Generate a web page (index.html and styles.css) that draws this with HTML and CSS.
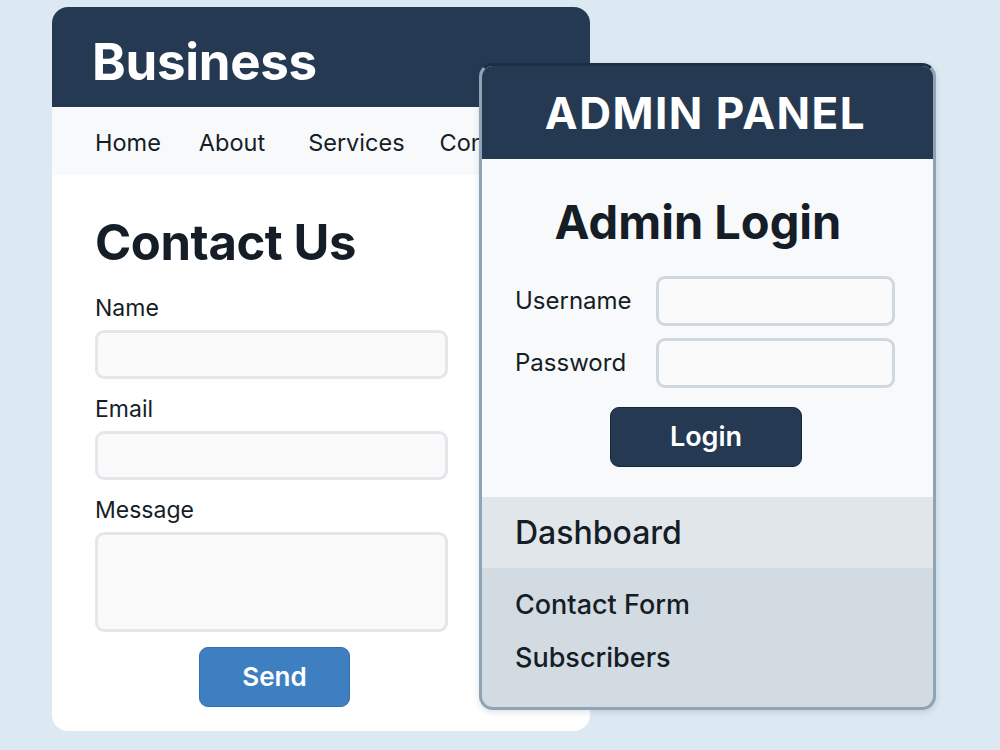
FILE: index.html
```html
<!DOCTYPE html>
<html lang="en">
  <head>
    <meta charset="UTF-8" />
    <meta name="viewport" content="width=device-width, initial-scale=1.0" />
    <title>Business - Admin</title>
    <link rel="stylesheet" href="styles.css">
  </head>
  <body>
    <div class="stage">
      <div class="site">
        <header class="site-header">
          <h1>Business</h1>
        </header>
        <nav class="site-nav">
          <a href="#">Home</a>
          <a href="#">About</a>
          <a href="#">Services</a>
          <a href="#">Contact</a>
        </nav>

        <div class="contact">
          <h2>Contact Us</h2>
          <label for="name">Name</label>
          <input type="text" id="name" />
          <label for="email">Email</label>
          <input type="text" id="email" />
          <label for="message">Message</label>
          <textarea id="message"></textarea>
          <button class="send-btn">Send</button>
        </div>
      </div>

      <div class="admin">
        <header class="admin-header">ADMIN PANEL</header>

        <div class="login">
          <h2>Admin Login</h2>
          <div class="login-row">
            <label for="username">Username</label>
            <input type="text" id="username" />
          </div>
          <div class="login-row">
            <label for="password">Password</label>
            <input type="password" id="password" />
          </div>
          <button class="login-btn">Login</button>
        </div>

        <div class="dashboard">Dashboard</div>
        <ul class="admin-menu">
          <li>Contact Form</li>
          <li>Subscribers</li>
        </ul>
      </div>
    </div>
  </body>
</html>
```

FILE: styles.css
```css
body {
  font-family: Inter, "Noto Sans", sans-serif;
  margin: 0;
  padding: 0;
  background-color: #dce9f3;
  color: #151d27;
}

.stage {
  position: relative;
  width: 1000px;
  height: 750px;
  padding: 7px 0 0 52px;
  box-sizing: border-box;
}

/* business site card */

.site {
  width: 538px;
  height: 724px;
  background-color: #ffffff;
  border-radius: 16px;
  overflow: hidden;
}

.site-header {
  background-color: #253a52;
  height: 100px;
  display: flex;
  align-items: center;
  padding: 8px 0 0 40px;
  box-sizing: border-box;
}

.site-header h1 {
  margin: 0;
  color: #ffffff;
  font-size: 51px;
  font-weight: 700;
  letter-spacing: -0.3px;
}

.site-nav {
  background-color: #f8f9fa;
  height: 68px;
  display: flex;
  align-items: center;
  padding: 3px 0 0 43px;
  box-sizing: border-box;
  gap: 38px;
}

.site-nav a {
  color: #151d27;
  text-decoration: none;
  font-size: 23.5px;
}

.site-nav a:nth-child(3) {
  margin-left: 5px;
}

.site-nav a:nth-child(4) {
  margin-left: -3px;
}

.contact {
  display: flex;
  flex-direction: column;
  padding: 41px 142px 0 43px;
}

.contact h2 {
  margin: 0 0 25px;
  font-size: 49px;
  font-weight: 700;
  letter-spacing: -0.4px;
  line-height: 1.1;
}

.contact label {
  font-size: 23px;
  line-height: 26px;
  margin-bottom: 9px;
}

.contact input,
.contact textarea {
  height: 49px;
  box-sizing: border-box;
  border: 3px solid #e3e7eb;
  border-radius: 9px;
  background-color: #fafafa;
  margin-bottom: 17px;
  resize: none;
}

.contact textarea {
  height: 100px;
  margin-bottom: 15px;
}

.send-btn {
  align-self: center;
  margin: 0 0 0 6px;
  width: 151px;
  height: 60px;
  background-color: #3d7fc1;
  border: 1px solid #346fab;
  border-radius: 9px;
  color: #ffffff;
  font-family: inherit;
  font-size: 26px;
  font-weight: 600;
  cursor: pointer;
}

/* admin panel, lying over the site card */

.admin {
  position: absolute;
  left: 479px;
  top: 63px;
  width: 457px;
  height: 647px;
  box-sizing: border-box;
  border: 3px solid #8fa3b3;
  border-top-color: #1d2f43;
  border-radius: 14px;
  overflow: hidden;
  background-color: #d3dbe2;
  display: flex;
  flex-direction: column;
  box-shadow: 0 2px 6px rgba(30, 50, 70, 0.15);
}

.admin-header {
  background-color: #253a52;
  height: 93px;
  flex-shrink: 0;
  display: flex;
  align-items: center;
  justify-content: center;
  padding-right: 4px;
  color: #ffffff;
  font-size: 44px;
  font-weight: 700;
  letter-spacing: 1.5px;
}

.login {
  background-color: #f8f9fa;
  display: flex;
  flex-direction: column;
  padding: 37px 38px 30px 33px;
}

.login h2 {
  margin: 0 0 28px;
  text-align: center;
  font-size: 47px;
  font-weight: 700;
  line-height: 1.1;
  padding-right: 14px;
}

.login-row {
  display: flex;
  align-items: center;
  justify-content: space-between;
  margin-bottom: 12px;
}

.login-row label {
  font-size: 24px;
}

.login-row input {
  width: 239px;
  height: 50px;
  box-sizing: border-box;
  border: 3px solid #cfd8de;
  border-radius: 9px;
  background-color: #fafafa;
}

.login-btn {
  align-self: center;
  margin: 7px 0 0 2px;
  width: 192px;
  height: 60px;
  background-color: #253a52;
  border: 1px solid #16263a;
  border-radius: 9px;
  color: #ffffff;
  font-family: inherit;
  font-size: 27px;
  font-weight: 600;
  cursor: pointer;
}

.dashboard {
  background-color: #e1e6eb;
  height: 71px;
  display: flex;
  align-items: center;
  padding-left: 33px;
  font-size: 32px;
  font-weight: 500;
}

.admin-menu {
  list-style-type: none;
  margin: 0;
  padding: 10px 0 0 33px;
}

.admin-menu li {
  font-size: 27px;
  font-weight: 500;
  line-height: 53px;
}
```
